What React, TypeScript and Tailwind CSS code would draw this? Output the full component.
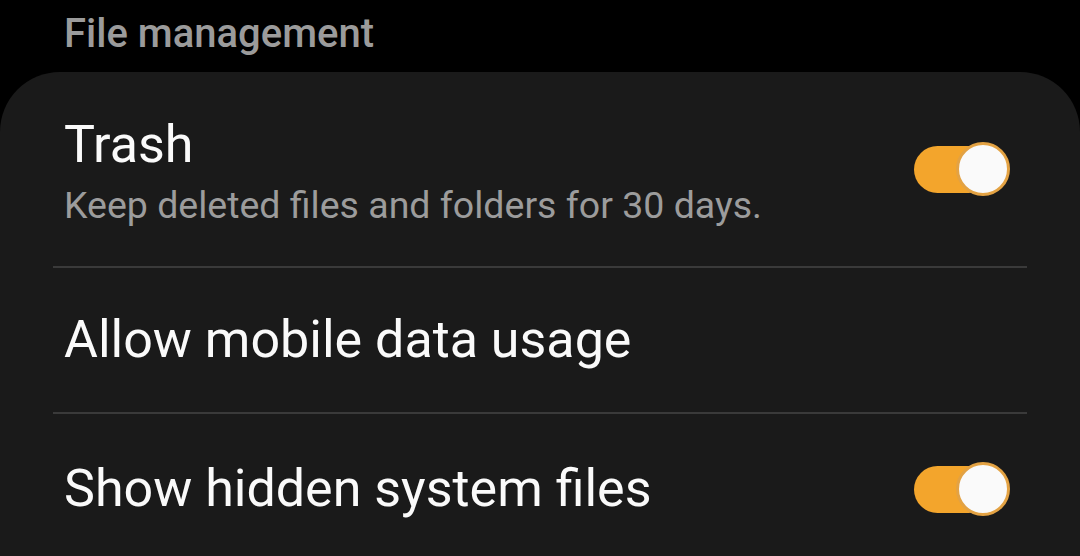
import { useState } from "react";

type ToggleProps = { on: boolean; onChange: () => void };

function Toggle({ on, onChange }: ToggleProps) {
  return (
    <button
      onClick={onChange}
      className="relative flex h-[56px] w-[96px] shrink-0 items-center"
    >
      <span
        className={`h-[47px] w-[78px] rounded-full ${
          on ? "bg-[#f3a52c]" : "bg-[#5a5a5a]"
        }`}
      />
      <span
        className={`absolute top-[1px] h-[54px] w-[54px] rounded-full border-[3px] bg-[#fafafa] ${
          on ? "left-[42px] border-[#e3a243]" : "left-0 border-[#5a5a5a]"
        }`}
      />
    </button>
  );
}

function App() {
  const [trash, setTrash] = useState(true);
  const [hidden, setHidden] = useState(true);

  return (
    <div className="h-[556px] w-[1080px] overflow-hidden bg-black font-['Roboto',sans-serif]">
      {/* Section header */}
      <div className="flex h-[72px] items-center pl-[64px] pb-[4px]">
        <h3 className="text-[40px] font-medium leading-none text-[#9b9b9b]">
          File management
        </h3>
      </div>

      {/* Settings card */}
      <div className="rounded-t-[60px] bg-[#1a1a1a]">
        <div className="flex h-[194px] items-center justify-between pl-[64px] pr-[70px]">
          <div className="flex flex-col pt-[4px]">
            <span className="text-[52px] leading-[62px] text-[#fafafa]">Trash</span>
            <span className="mt-[6px] text-[37.5px] leading-[46px] text-[#9c9c9c]">
              Keep deleted files and folders for 30 days.
            </span>
          </div>
          <Toggle on={trash} onChange={() => setTrash(!trash)} />
        </div>
        <div className="mx-[53px] h-[2px] bg-[#3a3a3a]" />

        <div className="flex h-[144px] items-center pl-[64px] pr-[70px]">
          <span className="text-[52px] leading-none text-[#fafafa]">
            Allow mobile data usage
          </span>
        </div>
        <div className="mx-[53px] h-[2px] bg-[#3a3a3a]" />

        <div className="flex h-[150px] items-center justify-between pl-[64px] pr-[70px]">
          <span className="text-[52px] leading-none text-[#fafafa]">
            Show hidden system files
          </span>
          <Toggle on={hidden} onChange={() => setHidden(!hidden)} />
        </div>
      </div>
    </div>
  );
}

export default App;
